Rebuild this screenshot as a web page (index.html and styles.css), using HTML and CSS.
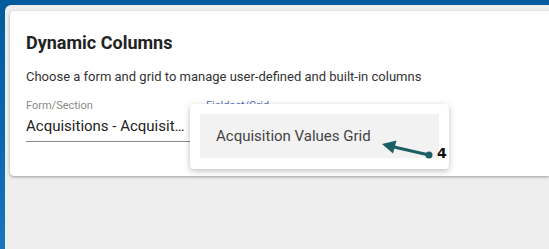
FILE: index.html
```html
<!DOCTYPE html>
<html lang="en">
<head>
    <meta charset="UTF-8">
    <meta name="viewport" content="width=device-width, initial-scale=1.0">
    <title>Dynamic Columns</title>
    <link rel="stylesheet" href="styles.css">
</head>
<body>

<div class="app-main">
    <div class="columns-card">
        <h2>Dynamic Columns</h2>
        <p class="intro">Choose a form and grid to manage user-defined and built-in columns</p>
        <div class="field-row">
            <div class="field">
                <label>Form/Section</label>
                <div class="field-value">Acquisitions - Acquisitions Details</div>
            </div>
            <div class="field field-focused">
                <label>Fieldset/Grid</label>
                <div class="field-value"></div>
            </div>
        </div>

        <!-- menu opened from the Fieldset/Grid select -->
        <div class="select-menu">
            <div class="menu-item">Acquisition Values Grid</div>
            <svg class="step-arrow" width="70" height="30" viewBox="0 0 70 30">
                <line x1="19" y1="11" x2="54" y2="19" stroke="#1b5f64" stroke-width="3" stroke-linecap="round"/>
                <polygon points="7,8 21.5,4.5 18,17.5" fill="#1b5f64"/>
                <circle cx="54" cy="19" r="3.5" fill="#1b5f64"/>
            </svg>
            <span class="step-num">4</span>
        </div>
    </div>
</div>

</body>
</html>
```

FILE: styles.css
```css
body {
    margin: 0;
    height: 100vh;
    background: linear-gradient(180deg, #005a9c 0%, #0e66b4 60%, #1a74c2 100%);
    font-family: Roboto, "Liberation Sans", sans-serif;
    overflow: hidden;
}
.app-main {
    margin: 5px 0 0 5px;
    height: calc(100vh - 5px);
    background-color: #eeeeee;
    border-top-left-radius: 6px;
    padding: 6px 0 0 5px;
    box-sizing: border-box;
}
.columns-card {
    position: relative;
    background-color: white;
    border-radius: 4px 0 0 4px;
    box-shadow: 0 1px 3px rgba(0, 0, 0, 0.35);
    height: 165px;
    padding: 20px 16px 0 16px;
    box-sizing: border-box;
}
.columns-card h2 {
    margin: 0;
    font-size: 18px;
    line-height: 24px;
    font-weight: 700;
    color: #222;
}
.columns-card .intro {
    margin: 13px 0 0 0;
    font-size: 13px;
    line-height: 18px;
    color: #333;
}
.field-row {
    display: flex;
    gap: 16px;
    margin-top: 13px;
}
.field {
    width: 164px;
}
.field label {
    display: block;
    font-size: 11px;
    line-height: 14px;
    color: #8a8a8a;
}
.field-focused label {
    color: #5a6fc0;
}
.field-value {
    font-size: 15px;
    line-height: 20px;
    color: #222;
    padding: 3px 3px 5px 0;
    height: 20px;
    border-bottom: 1px solid #8a8a8a;
    white-space: nowrap;
    overflow: hidden;
    text-overflow: ellipsis;
}
.select-menu {
    position: absolute;
    left: 180px;
    top: 93px;
    width: 259px;
    height: 65px;
    padding: 10px;
    box-sizing: border-box;
    background-color: white;
    border-radius: 4px;
    box-shadow: 0 2px 6px rgba(0, 0, 0, 0.25);
}
.menu-item {
    height: 44px;
    line-height: 44px;
    padding-left: 16px;
    background-color: #f2f2f2;
    font-size: 15px;
    color: #444;
}
.step-arrow {
    position: absolute;
    left: 185px;
    top: 32px;
}
.step-num {
    position: absolute;
    left: 247px;
    top: 41px;
    font-family: "DejaVu Sans", sans-serif;
    font-weight: bold;
    font-size: 14px;
    color: #111;
}
```
